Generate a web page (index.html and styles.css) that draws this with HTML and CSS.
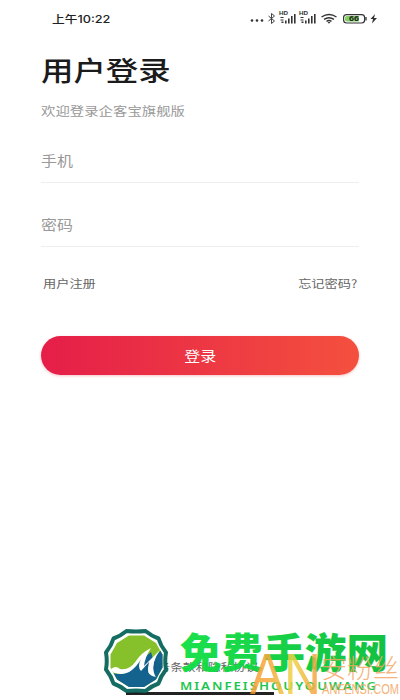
FILE: index.html
```html
<!DOCTYPE html>
<html lang="zh-CN">
<head>
    <meta charset="UTF-8">
    <meta name="viewport" content="width=device-width, initial-scale=1.0">
    <title>用户登录</title>
    <link rel="stylesheet" href="styles.css">
</head>
<body>
    <div class="screen">
        <header class="status">
            <span class="time wide">上午10:22</span>
            <svg class="status-icons" width="130" height="16" viewBox="0 0 130 16">
                <g fill="#333">
                    <circle cx="2" cy="10.5" r="1.3"/><circle cx="7" cy="10.5" r="1.3"/><circle cx="12" cy="10.5" r="1.3"/>
                </g>
                <path d="M18.5 6l6 5-3 2.5v-10l3 2.5-6 5" fill="none" stroke="#444" stroke-width="1"/>
                <g id="signal" fill="#333">
                    <text x="29" y="5" class="hd" textLength="9" lengthAdjust="spacingAndGlyphs">HD</text>
                    <path d="M30.500 7h3v1h-3zM30.500 9.500h3v1h-3zM31.500 11.500h2v1.500h-2zM35 10.500h1.600v3H35zM38 8.500h1.600v5H38zM41 6h1.600v7.500H41zM44 4h1.600v9.500H44z"/>
                </g>
                <use href="#signal" x="20"/>
                <g fill="none" stroke="#333" stroke-width="1.5">
                    <path d="M71.500 7q7.500-5 15 0M74 9.300q5-3.300 10 0M76.500 11.300q2.500-1.600 5 0"/>
                </g>
                <path d="M77.500 12h3l-1.500 1.800z" fill="#333"/>
                <rect x="93.600" y="4.600" width="21" height="8.400" rx="3" fill="#fff" stroke="#333" stroke-width="1.200"/>
                <path d="M97 6h12v5.600H97q-2 0-2-2V8q0-2 2-2z" fill="#7fd062"/>
                <path d="M116 7v3.500" stroke="#333" stroke-width="1.300"/>
                <text x="99" y="11.300" class="battery" textLength="10" lengthAdjust="spacingAndGlyphs">66</text>
                <path d="M125 4l-4.500 5h2.500l-1 4.500 5-5.500h-3z" fill="#333"/>
            </svg>
        </header>

        <main class="login">
            <h1><span class="wide">用户登录</span></h1>
            <p class="welcome"><span class="wide">欢迎登录企客宝旗舰版</span></p>
            <div class="field"><span class="wide">手机</span></div>
            <div class="field"><span class="wide">密码</span></div>
            <div class="links">
                <a class="wide">用户注册</a>
                <a class="wide forgot">忘记密码?</a>
            </div>
            <button class="submit"><span class="wide center">登录</span></button>
        </main>

        <footer class="terms"><span class="wide">服务条款和隐私协议</span></footer>
        <div class="home-bar"></div>

        <svg class="watermark" width="400" height="80" viewBox="0 620 400 80">
            <defs>
                <linearGradient id="gold" x1="0" x2="1">
                    <stop offset="0" stop-color="#f9962a"/>
                    <stop offset=".3" stop-color="#f5a832"/>
                    <stop offset=".6" stop-color="#ecd23c"/>
                    <stop offset="1" stop-color="#f8963a"/>
                </linearGradient>
                <linearGradient id="green" x1="0" x2="1">
                    <stop offset="0" stop-color="#0ee044"/>
                    <stop offset="1" stop-color="#08bd38"/>
                </linearGradient>
                <clipPath id="disc"><path d="M129 635.500h15l12 7.500 6.500 11.500v13l-6.500 12-12 7.500h-15l-12-7.500-6.500-12v-13l6.500-11.500z"/></clipPath>
            </defs>
            <path d="M126.500 631q9.500 1 19 0 6 5 13 7.500 2 7 7.500 14-1.500 8.500 0 17-5.500 7-7.500 14-7 2.500-13 7.500-9.500-1-19 0-6-5-13-7.500-2-7-7.500-14 1.500-8.500 0-17 5.500-7 7.500-14 7-2.500 13-7.500z" fill="#fff" stroke="#08655a" stroke-width="4" stroke-linejoin="round"/>
            <g clip-path="url(#disc)">
                <path d="M105 630h62v62h-62z" fill="#80bd20"/>
                <path d="M108 672q14 5 24-4l19-16 2 7 8-9h8v42h-61z" fill="#075b88"/>
            </g>
            <path d="M111 669q5-4 9 0 9 2 16-8 5-8 15-13-6 9-7 18l16-16q-9 13-6 23 1 3 2 4-9-1-8-9l1-6-8 9q-4-4 0-12-11 19-26 14-2 0-4-4z" fill="#fff"/>
            <text x="180" y="668" class="brand" fill="url(#green)" textLength="208" lengthAdjust="spacingAndGlyphs">免费手游网</text>
            <text x="180" y="690" class="pinyin" textLength="198" lengthAdjust="spacingAndGlyphs">MIANFEISHOUYOUWANG</text>
            <g class="ansi">
                <text x="250" y="694" class="an" fill="url(#gold)" textLength="71" lengthAdjust="spacingAndGlyphs">AN</text>
                <text x="321" y="678" class="name" textLength="78" lengthAdjust="spacingAndGlyphs">安粉丝</text>
                <text x="322" y="694" class="domain" textLength="77" lengthAdjust="spacingAndGlyphs">ANFENSI.COM</text>
            </g>
        </svg>
    </div>
</body>
</html>
```

FILE: styles.css
```css
* {
    box-sizing: border-box;
}

body {
    margin: 0;
    background: #fff;
    font-family: "Noto Sans CJK SC", sans-serif;
}

.screen {
    position: relative;
    display: flex;
    flex-direction: column;
    width: 400px;
    height: 700px;
    overflow: hidden;
}

.wide {
    display: inline-block;
    transform: scaleX(1.2);
    transform-origin: left center;
    white-space: nowrap;
}

.status {
    display: flex;
    justify-content: space-between;
    align-items: center;
    height: 36px;
    padding: 0 20px 0 52px;
}

.time {
    font-family: Inter, "Noto Sans CJK SC", sans-serif;
    font-size: 10.6px;
    font-weight: 500;
    color: #222;
}

.hd {
    font: bold 5px "Liberation Sans", sans-serif;
}

.battery {
    font: bold 7px "Liberation Sans", sans-serif;
    fill: #222;
}

.login {
    flex: 1;
    padding: 15px 41px 0;
}

h1 {
    margin: 0;
    font-size: 27px;
    line-height: 38px;
    font-weight: 500;
    color: #1b1b1b;
}

.welcome {
    margin: 12px 0 0;
    font-size: 12px;
    line-height: 20px;
    color: #999;
}

.field {
    height: 44px;
    margin-top: 18px;
    border-bottom: 1px solid #eee;
    font-size: 13.3px;
    line-height: 44px;
    color: #999;
}

.field + .field {
    margin-top: 20px;
}

.links {
    display: flex;
    justify-content: space-between;
    margin-top: 26px;
    padding: 0 2px;
    font-size: 11px;
    line-height: 20px;
    color: #666;
}

.forgot {
    transform-origin: right center;
}

.submit {
    display: block;
    width: 318px;
    height: 39px;
    margin: 43px 0 0;
    padding: 0;
    border: none;
    border-radius: 20px;
    background: linear-gradient(90deg, #e51e49, #f4503e);
    box-shadow: 0 1px 3px rgba(230, 50, 60, 0.3);
    color: #fff;
    font-family: inherit;
    font-size: 13.3px;
}

.center {
    transform-origin: center;
}

.terms {
    height: 33px;
    padding-left: 145px;
    font-size: 10.5px;
    line-height: 16px;
    color: #666;
}

.home-bar {
    width: 148px;
    height: 3px;
    margin: 0 0 5px 126px;
    background: #222;
}

.watermark {
    position: absolute;
    left: 0;
    bottom: 0;
    opacity: 0.95;
}

.ansi {
    opacity: 0.85;
}

.an {
    font: 58px "Liberation Sans", sans-serif;
}

.name {
    font-size: 26px;
    font-weight: 300;
    fill: #f5a25c;
}

.domain {
    font: 15px "Liberation Sans", sans-serif;
    fill: #f5a25c;
}

.brand {
    font-size: 41px;
    font-weight: 900;
}

.pinyin {
    font: 600 11px "Noto Sans", sans-serif;
    letter-spacing: 1.6px;
    fill: #12c445;
}
```
